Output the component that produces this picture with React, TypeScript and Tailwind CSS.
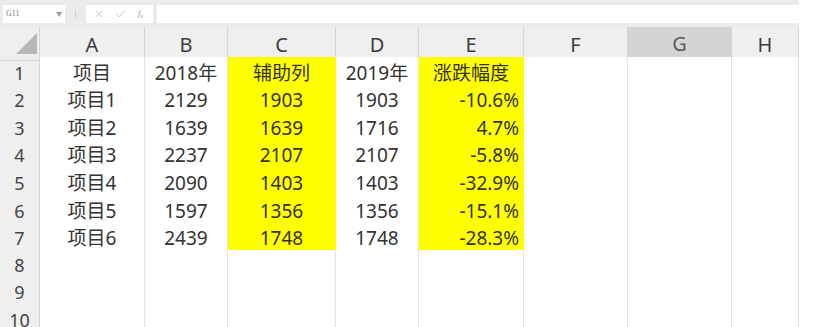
import React from "react";

const cols = ["A", "B", "C", "D", "E", "F", "G", "H"];

// widths of row header + columns A..H
const gridCols = "grid-cols-[40px_105px_83px_108px_83px_105px_104px_104px_67px]";

const rowHeights = [
  "h-[27px]",
  "h-[28px]",
  "h-[27px]",
  "h-[28px]",
  "h-[28px]",
  "h-[27px]",
  "h-[28px]",
  "h-[27px]",
  "h-[28px]",
  "h-[28px]",
];

const data: string[][] = [
  ["项目", "2018年", "辅助列", "2019年", "涨跌幅度"],
  ["项目1", "2129", "1903", "1903", "-10.6%"],
  ["项目2", "1639", "1639", "1716", "4.7%"],
  ["项目3", "2237", "2107", "2107", "-5.8%"],
  ["项目4", "2090", "1403", "1403", "-32.9%"],
  ["项目5", "1597", "1356", "1356", "-15.1%"],
  ["项目6", "2439", "1748", "1748", "-28.3%"],
];

const FormulaBar: React.FC = () => (
  <div className="flex h-[27px] items-start bg-[#ebebeb] pt-[5px] pl-[3px]">
    <div className="flex h-[18px] w-[62px] items-center justify-between bg-white px-[3px]">
      <span className="text-[8px] text-[#777] font-['Liberation_Serif',serif]">G11</span>
      <span className="text-[6px] text-[#999]">▼</span>
    </div>
    <div className="flex h-[18px] w-[21px] items-center justify-center">
      <div className="h-[8px] w-px bg-[#cfcfcf]" />
    </div>
    <div className="flex h-[18px] w-[67px] items-center bg-white text-[#c4c4c4]">
      <svg width="10" height="10" viewBox="0 0 10 10" className="ml-[8px]">
        <path d="M2 2 L8 8 M8 2 L2 8" stroke="#cfcfcf" strokeWidth="1" />
      </svg>
      <svg width="11" height="10" viewBox="0 0 11 10" className="ml-[11px]">
        <path d="M1.5 5.5 L4 8 L9.5 2" stroke="#cfcfcf" strokeWidth="1" fill="none" />
      </svg>
      <span className="ml-[12px] text-[9px] italic font-['Liberation_Serif',serif] text-[#9a9a9a]">
        f<sub className="text-[6px]">x</sub>
      </span>
    </div>
    <div className="ml-[4px] h-[18px] w-[642px] bg-white" />
  </div>
);

const HeaderRow: React.FC = () => (
  <div className={`grid ${gridCols} h-[30px]`}>
    <div className="relative border-r border-b border-[#d5d5d5] bg-[#efefef]">
      <svg width="40" height="30" viewBox="0 0 40 30" className="absolute left-0 top-0">
        <polygon points="37,6 37,27 16,27" fill="#b7b7b7" />
      </svg>
    </div>
    {cols.map((c) => {
      const selected = c === "G";
      return (
        <div
          key={c}
          className={
            selected
              ? "flex items-center justify-center border-r border-b-2 border-r-[#d5d5d5] border-b-[#5f9b78] bg-[#d4d4d4] pt-[2px] text-[20px] text-[#5a5a5a]"
              : "flex items-center justify-center border-r border-b border-[#d5d5d5] bg-[#efefef] pt-[2px] text-[20px] text-[#3c3c3c]"
          }
        >
          {c}
        </div>
      );
    })}
  </div>
);

const Row: React.FC<{ index: number }> = ({ index }) => {
  const values = data[index] ?? ["", "", "", "", ""];
  const filled = index < data.length;
  return (
    <div className={`grid ${gridCols} ${rowHeights[index]}`}>
      <div className="flex items-center justify-center border-r border-b border-[#d5d5d5] bg-[#efefef] pt-[2px] text-[18px] text-[#444]">
        {index + 1}
      </div>
      {cols.map((c, ci) => {
        const yellow = filled && (c === "C" || c === "E");
        const v = ci < 5 ? values[ci] : "";
        return (
          <div
            key={c}
            className={
              yellow
                ? `flex items-center ${c === "E" && index > 0 ? "justify-end pr-[4px]" : "justify-center"} border-r border-b border-[#ffff00] bg-[#ffff00] pt-[2px] text-[19px] text-[#333]`
                : "flex items-center justify-center border-r border-b border-[#e2e2e2] bg-white pt-[2px] text-[19px] text-[#333]"
            }
          >
            {v}
          </div>
        );
      })}
    </div>
  );
};

export default function App() {
  return (
    <div className="h-[327px] w-[818px] overflow-hidden bg-white font-['Noto_Sans','Noto_Sans_CJK_SC',sans-serif]">
      <div className="w-[799px]">
        <FormulaBar />
        <HeaderRow />
        {rowHeights.map((_, i) => (
          <Row key={i} index={i} />
        ))}
      </div>
    </div>
  );
}
